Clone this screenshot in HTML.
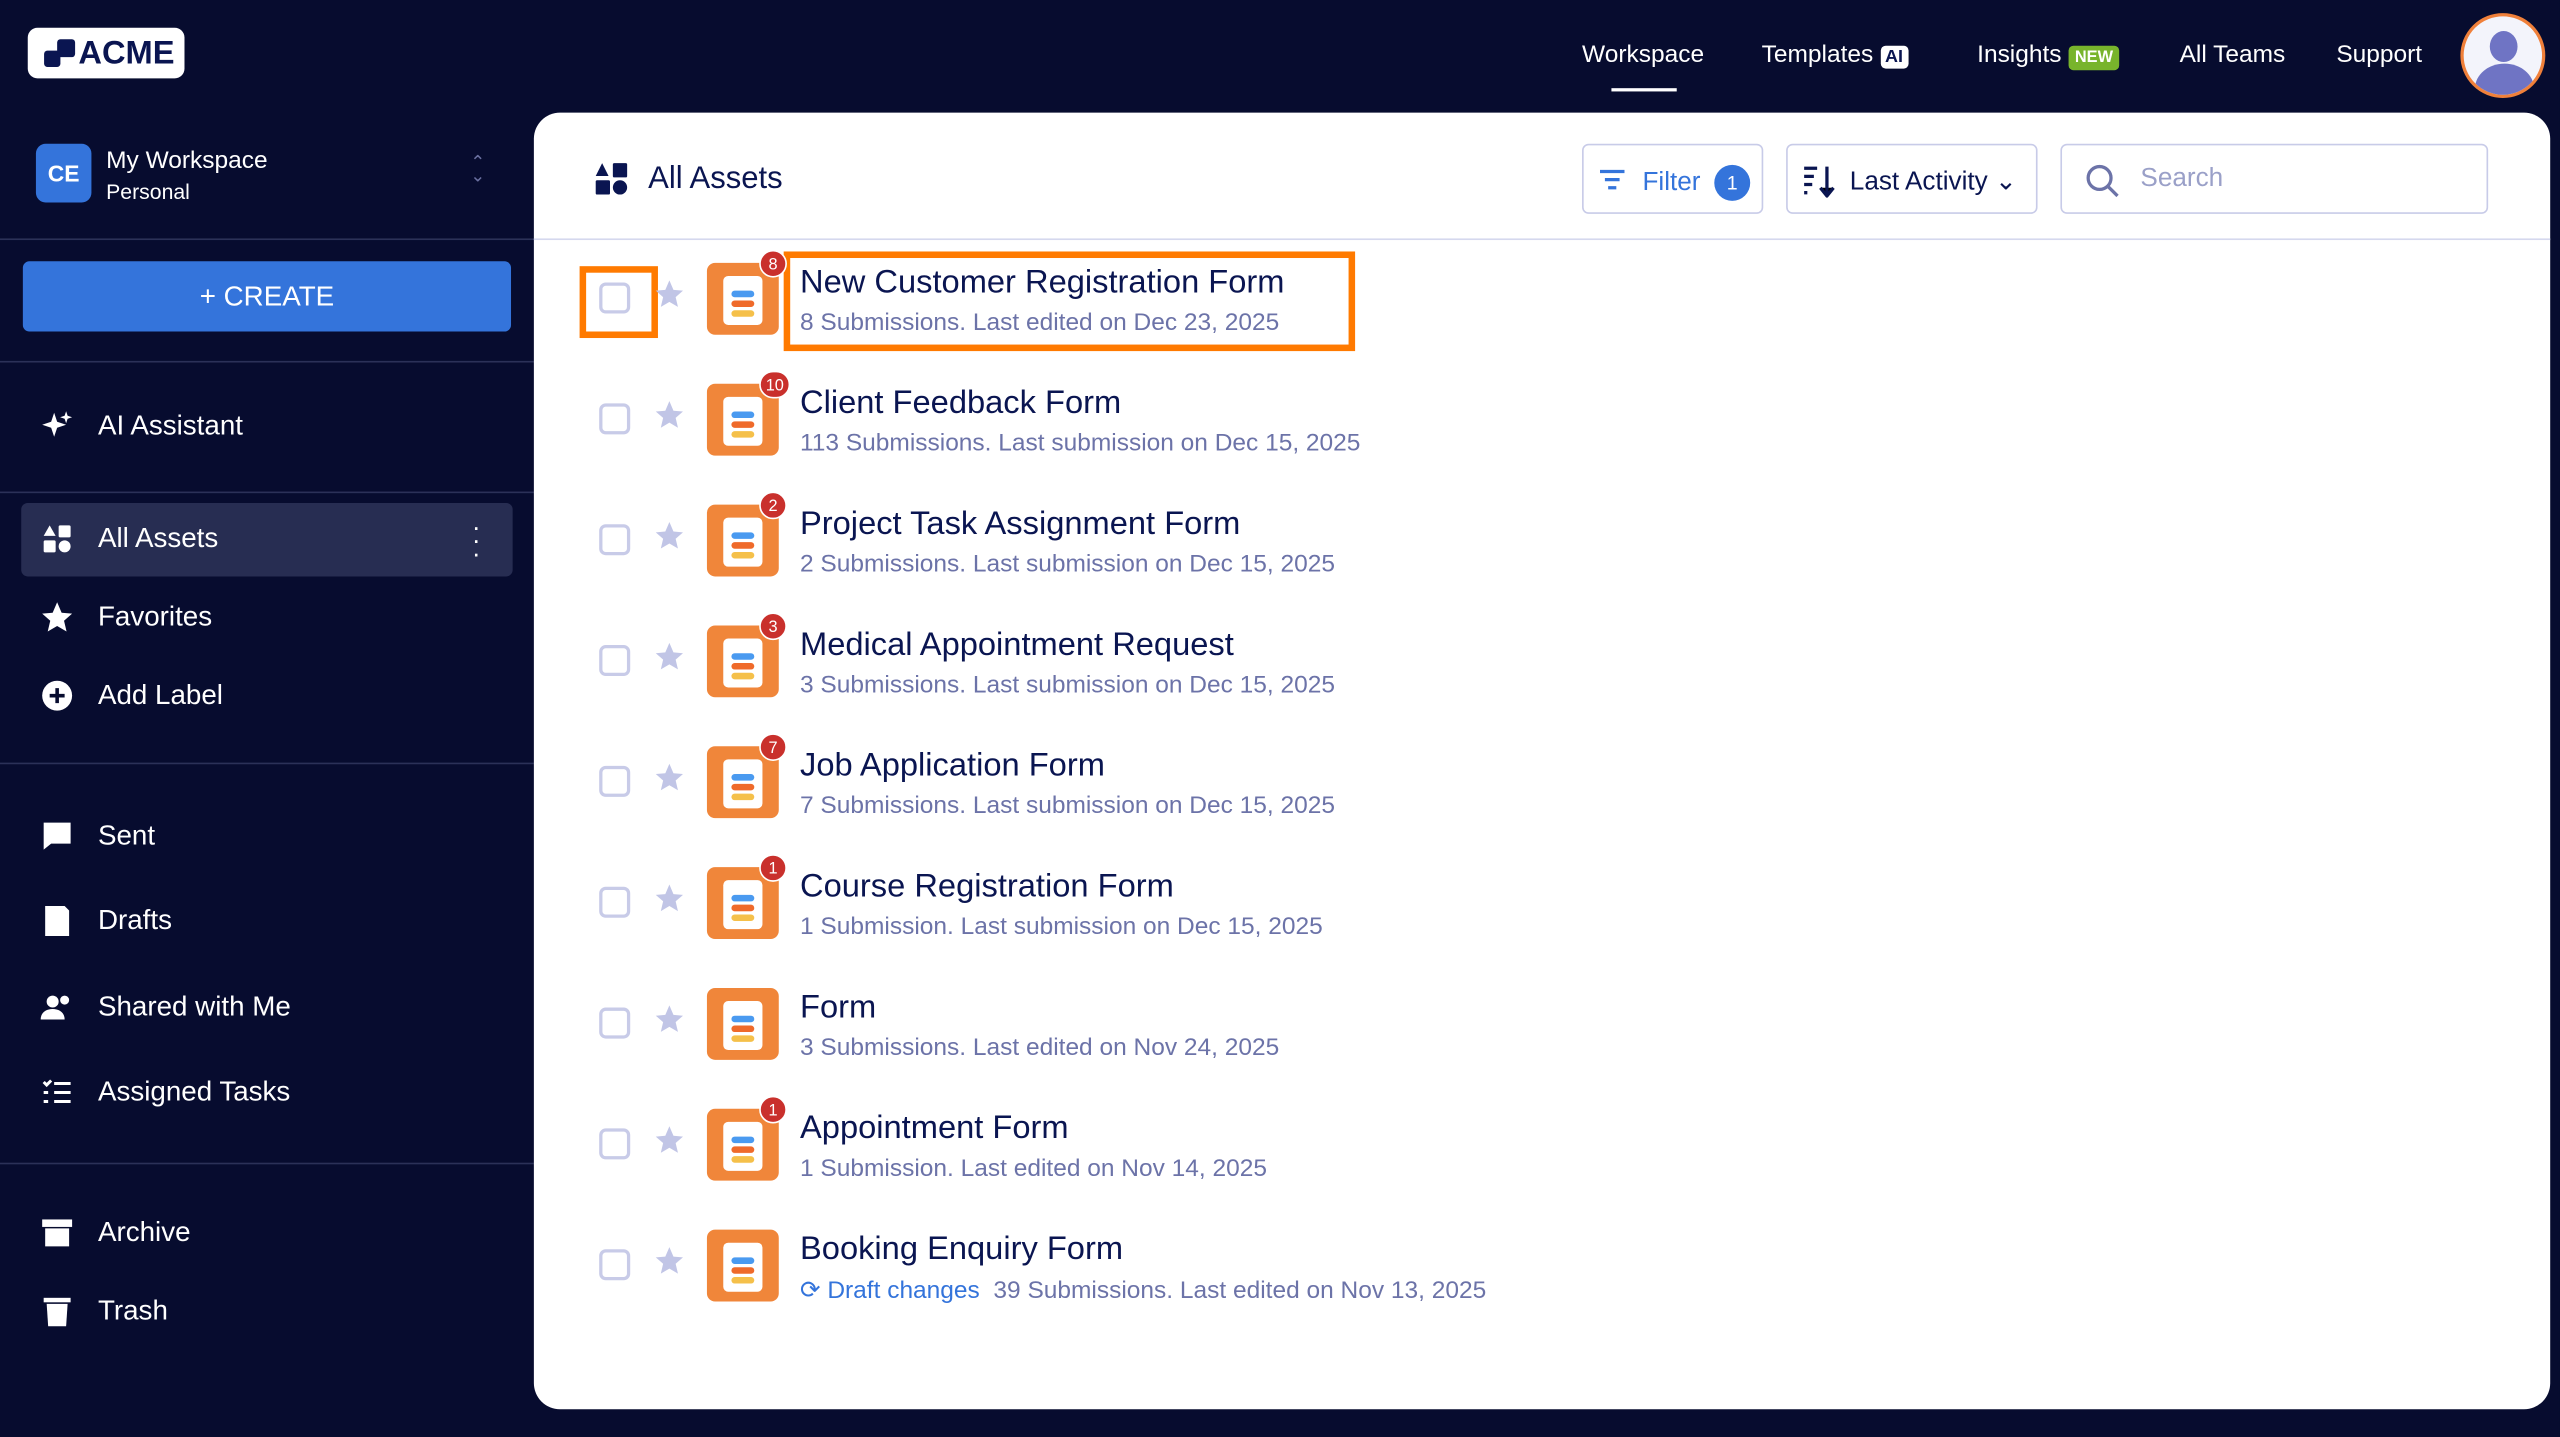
<!DOCTYPE html>
<html><head><meta charset="utf-8"><style>
*{box-sizing:border-box;margin:0;padding:0}
html,body{width:2560px;height:1437px;overflow:hidden;background:#070c2f}
#s{position:absolute;left:0;top:0;width:1568px;height:880px;transform:scale(1.63265,1.633);transform-origin:0 0;background:#070c2f;font-family:"Liberation Sans",sans-serif;color:#fff}
.a{position:absolute}
.nav{font-size:15px;top:25px}
.hr{position:absolute;left:0;width:327px;height:1px;background:#2b3158}
.si{position:absolute;left:24px;font-size:17px;display:flex;align-items:center;gap:14px}
.si svg{width:22px;height:22px}
.main{position:absolute;left:327px;top:69px;width:1235px;height:794px;background:#fff;border-radius:16px}
.row{position:absolute;left:0;height:60px;width:900px}
.cb{position:absolute;left:40px;top:20px;width:19px;height:19px;border:2px solid #c8cbe8;border-radius:4px}
.st{position:absolute;left:73px;top:17px}
.ic{position:absolute;left:106px;top:8px;width:44px;height:44px;background:#f0863a;border-radius:5px}
.ic i{position:absolute;left:10px;top:8px;width:24px;height:30px;background:#fff;border-radius:3px}
.ic b{position:absolute;left:15px;width:14px;height:4px;border-radius:2px}
.bd{position:absolute;left:138px;top:0;min-width:17px;height:17px;border-radius:9px;background:#c9302c;color:#fff;font-size:10px;text-align:center;line-height:17px;border:1px solid #fff;padding:0 3px}
.t{position:absolute;left:163px;top:9px;font-size:20px;color:#0a1551;white-space:nowrap}
.sub{position:absolute;left:163px;top:36px;font-size:15px;color:#6c73a8;white-space:nowrap}
</style></head><body><div id="s">
<div class="a" style="left:17px;top:17px;width:96px;height:31px;background:#fff;border-radius:6px;color:#0a1551;font-weight:bold;font-size:20px;padding:5px 0 0 31px">ACME
<div class="a" style="left:10px;top:14px;width:10px;height:10px;background:#0a1551;border-radius:2px"></div><div class="a" style="left:18px;top:7px;width:11px;height:11px;background:#0a1551;border-radius:2px"></div></div>
<div class="a nav" style="left:969px">Workspace</div>
<div class="a" style="left:987px;top:54px;width:40px;height:2px;background:#fff"></div>
<div class="a nav" style="left:1079px">Templates <span style="background:#fff;color:#0a1551;font-size:11px;font-weight:bold;padding:1px 3px;border-radius:3px">AI</span></div>
<div class="a nav" style="left:1211px">Insights <span style="background:#78b42c;color:#fff;font-size:10px;font-weight:bold;padding:2px 4px;border-radius:3px">NEW</span></div>
<div class="a nav" style="left:1335px">All Teams</div>
<div class="a nav" style="left:1431px">Support</div>
<div class="a" style="left:1507px;top:8px;width:52px;height:52px;border-radius:50%;background:#f3f4fb;border:2px solid #f0803a;overflow:hidden"><div class="a" style="left:16px;top:9px;width:17px;height:19px;border-radius:50%;background:#6f74c4"></div><div class="a" style="left:7px;top:29px;width:36px;height:30px;border-radius:50%;background:#6f74c4"></div></div>

<div class="a" style="left:22px;top:88px;width:34px;height:36px;border-radius:6px;background:#3474db;font-size:14px;font-weight:bold;text-align:center;line-height:36px">CE</div>
<div class="a" style="left:65px;top:90px;font-size:15px">My Workspace</div>
<div class="a" style="left:65px;top:110px;font-size:13px">Personal</div>
<div class="a" style="left:288px;top:96px;color:#6a70a0;font-size:11px;line-height:8px">⌃<br>⌄</div>
<div class="hr" style="top:146px"></div>
<div class="a" style="left:14px;top:160px;width:299px;height:43px;background:#3474db;border-radius:4px;text-align:center;line-height:43px;font-size:17px">+ CREATE</div>
<div class="hr" style="top:221px"></div>
<div class="si" style="top:250px"><svg viewBox="0 0 24 24" fill="#fff"><path d="M10 3l2 6 6 2-6 2-2 6-2-6-6-2 6-2z"/><path d="M18 2l1 3 3 1-3 1-1 3-1-3-3-1 3-1z"/></svg>AI Assistant</div>
<div class="hr" style="top:301px"></div>
<div class="a" style="left:13px;top:308px;width:301px;height:45px;background:#272d52;border-radius:4px"></div>
<div class="si" style="top:319px"><svg viewBox="0 0 24 24" fill="#fff"><path d="M7 3l4 7H3z"/><rect x="13" y="3" width="8" height="8" rx="1"/><rect x="3" y="13" width="8" height="8" rx="1"/><circle cx="17" cy="17" r="4"/></svg>All Assets</div>
<div class="a" style="left:289px;top:320px;font-size:16px;line-height:8px">·<br>·<br>·</div>
<div class="si" style="top:367px"><svg viewBox="0 0 24 24" fill="#fff"><path d="M12 2l3 7 7 .6-5.4 4.7 1.7 7.2L12 17.8 5.7 21.5l1.7-7.2L2 9.6 9 9z"/></svg>Favorites</div>
<div class="si" style="top:415px"><svg viewBox="0 0 24 24"><circle cx="12" cy="12" r="10" fill="#fff"/><path d="M12 7v10M7 12h10" stroke="#070c2f" stroke-width="2.4"/></svg>Add Label</div>
<div class="hr" style="top:467px"></div>
<div class="si" style="top:501px"><svg viewBox="0 0 24 24" fill="#fff"><path d="M3 3h18v14H8l-5 4z"/></svg>Sent</div>
<div class="si" style="top:553px"><svg viewBox="0 0 24 24" fill="#fff"><path d="M4 2h13l3 3v17H4z"/></svg>Drafts</div>
<div class="si" style="top:606px"><svg viewBox="0 0 24 24" fill="#fff"><circle cx="9" cy="8" r="4"/><path d="M1 20c0-5 4-7 8-7s8 2 8 7z"/><circle cx="17" cy="7" r="3"/></svg>Shared with Me</div>
<div class="si" style="top:658px"><svg viewBox="0 0 24 24" stroke="#fff" stroke-width="2" fill="none"><path d="M3 5l2 2 3-3M10 6h11M3 12h3M10 12h11M3 18h3M10 18h11"/></svg>Assigned Tasks</div>
<div class="hr" style="top:712px"></div>
<div class="si" style="top:744px"><svg viewBox="0 0 24 24" fill="#fff"><rect x="2" y="3" width="20" height="5"/><path d="M4 9h16v12H4z"/></svg>Archive</div>
<div class="si" style="top:792px"><svg viewBox="0 0 24 24" fill="#fff"><rect x="3" y="3" width="18" height="3"/><path d="M5 7h14l-1 15H6z"/></svg>Trash</div>

<div class="main">
<svg class="a" style="left:37px;top:30px" width="21" height="21" viewBox="0 0 24 24" fill="#0a1551"><path d="M5.5 1l4.5 9H1z"/><rect x="13" y="1" width="10" height="10" rx="1"/><rect x="1" y="13" width="10" height="10" rx="1"/><circle cx="18" cy="18" r="5"/></svg>
<div class="a" style="left:70px;top:30px;font-size:19px;color:#0a1551">All Assets</div>
<div class="a" style="left:642px;top:19px;width:111px;height:43px;border:1px solid #c8cbe8;border-radius:4px;color:#3474db;font-size:16px;padding:12px 0 0 36px">Filter <span style="display:inline-block;width:22px;height:22px;border-radius:50%;background:#3474db;color:#fff;font-size:12px;text-align:center;line-height:22px;vertical-align:middle;margin-left:4px">1</span>
<svg class="a" style="left:10px;top:14px" width="15" height="14" stroke="#3474db" stroke-width="2"><path d="M0 2h15M3 7h9M5 12h5"/></svg></div>
<div class="a" style="left:767px;top:19px;width:154px;height:43px;border:1px solid #c8cbe8;border-radius:4px;color:#0a1551;font-size:16px;padding:12px 0 0 38px">Last Activity ⌄
<svg class="a" style="left:10px;top:12px" width="22" height="20" stroke="#0a1551" stroke-width="2"><path d="M0 2h8M0 7h6M0 12h5M0 17h2M14 1v17M10 14l4 5 4-5"/></svg></div>
<div class="a" style="left:935px;top:19px;width:262px;height:43px;border:1px solid #c8cbe8;border-radius:4px;color:#9aa0c8;font-size:16px;padding:12px 0 0 48px">Search
<svg class="a" style="left:14px;top:11px" width="22" height="22" stroke="#6c73a8" stroke-width="2" fill="none"><circle cx="9" cy="9" r="7"/><path d="M14 14l6 6"/></svg></div>
<div class="a" style="left:0;top:77px;width:1235px;height:1px;background:#d5d8ee"></div>

<div class="a" style="left:28px;top:94px;width:48px;height:44px;border:4px solid #ff7a00"></div>
<div class="a" style="left:153px;top:85px;width:350px;height:61px;border:4px solid #ff7a00"></div>
<div id="rows"></div>
</div>
</div>
<script>
var d=[["New Customer Registration Form","8 Submissions. Last edited on Dec 23, 2025","8"],
["Client Feedback Form","113 Submissions. Last submission on Dec 15, 2025","10"],
["Project Task Assignment Form","2 Submissions. Last submission on Dec 15, 2025","2"],
["Medical Appointment Request","3 Submissions. Last submission on Dec 15, 2025","3"],
["Job Application Form","7 Submissions. Last submission on Dec 15, 2025","7"],
["Course Registration Form","1 Submission. Last submission on Dec 15, 2025","1"],
["Form","3 Submissions. Last edited on Nov 24, 2025",""],
["Appointment Form","1 Submission. Last edited on Nov 14, 2025","1"],
["Booking Enquiry Form","<span style='color:#3474db'>⟳ Draft changes</span>&nbsp; 39 Submissions. Last edited on Nov 13, 2025",""]];
var h="";d.forEach(function(r,i){h+='<div class="row" style="top:'+(84+74*i)+'px"><div class="cb"></div><svg class="st" width="20" height="20" viewBox="0 0 24 24" fill="#c1c5e6"><path d="M12 2l3 7 7 .6-5.4 4.7 1.7 7.2L12 17.8 5.7 21.5l1.7-7.2L2 9.6 9 9z"/></svg><div class="ic"><i></i><b style="top:17px;background:#4a9af0"></b><b style="top:23px;background:#ef6a2a"></b><b style="top:29px;background:#f5c04a"></b></div>'+(r[2]?'<div class="bd">'+r[2]+'</div>':'')+'<div class="t">'+r[0]+'</div><div class="sub">'+r[1]+'</div></div>'});
document.getElementById("rows").innerHTML=h;
</script>
</body></html>
